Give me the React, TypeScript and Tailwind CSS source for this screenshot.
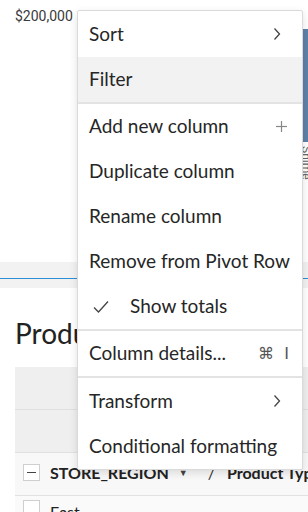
import React from "react";

const Chevron = () => (
  <svg width="8" height="14" viewBox="0 0 8 14" className="shrink-0">
    <polyline points="1.5,1.5 6.5,7 1.5,12.5" fill="none" stroke="#444" strokeWidth="1.3" />
  </svg>
);

const Plus = () => (
  <svg width="13" height="13" viewBox="0 0 13 13" className="shrink-0">
    <line x1="6.5" y1="1" x2="6.5" y2="12" stroke="#888" strokeWidth="1.2" />
    <line x1="1" y1="6.5" x2="12" y2="6.5" stroke="#888" strokeWidth="1.2" />
  </svg>
);

const Check = () => (
  <svg width="16" height="14" viewBox="0 0 16 14" className="shrink-0">
    <polyline points="1,7.5 5.5,12 15,1.5" fill="none" stroke="#444" strokeWidth="1.3" />
  </svg>
);

const Sep = () => <div className="h-[2px] bg-[#e3e3e3]" />;

export default function App() {
  return (
    <div className="relative w-[308px] h-[512px] overflow-hidden bg-white font-['Lato',sans-serif] text-[#262626]">
      {/* chart area */}
      <div className="relative h-[262px]">
        <div className="pl-[15px] pt-[8px] text-[14px] leading-[16px] text-[#3a3a3a] font-['Roboto',sans-serif]">
          $200,000
        </div>
        <div className="absolute left-[303px] top-[29px] w-[5px] h-[113px] bg-[#5f80a8]" />
        <div className="absolute left-[300px] top-[146px] origin-top-left rotate-90 translate-x-[12px] text-[12px] leading-[12px] whitespace-nowrap text-[#666] font-['Roboto',sans-serif]">
          Shime
        </div>
      </div>
      {/* band */}
      <div className="bg-[#f2f2f2]">
        <div className="h-[16px]" />
        <div className="h-px bg-[#2d8fd5]" />
        <div className="h-[9px]" />
      </div>
      {/* lower card */}
      <div className="bg-white">
        <div className="pl-[15px] pt-[29px] text-[28px] leading-[32px] text-[#222]">Product Types</div>
        <div className="ml-[15px] mt-[18px]">
          <div className="h-[43px] bg-[#efefef] border-b border-[#e0e0e0]" />
          <div className="h-[43px] bg-[#efefef] border-b border-[#e0e0e0]" />
          <div className="h-[43px] bg-[#f8f8f8] border-b border-[#e2e2e2] flex items-center pl-[8px] pb-[3px] whitespace-nowrap">
            <div className="w-[17px] h-[17px] bg-white border border-[#cfcfcf] flex items-center justify-center shrink-0">
              <div className="w-[9px] h-[1.5px] bg-[#444]" />
            </div>
            <span className="ml-[10px] text-[16px] font-bold text-[#222]">STORE_REGION</span>
            <span className="ml-[10px] text-[9px] text-[#444]">▼</span>
            <span className="ml-[20px] text-[16px] text-[#333]">/</span>
            <span className="ml-[12px] text-[16px] font-bold text-[#222]">Product Type</span>
          </div>
          <div className="h-[43px] bg-[#fafafa] flex items-start pl-[8px] pt-[4px] whitespace-nowrap">
            <div className="w-[17px] h-[17px] bg-white border border-[#cfcfcf] shrink-0" />
            <span className="ml-[10px] text-[16px] text-[#222] leading-[20px] mt-[2px]">East</span>
          </div>
        </div>
      </div>

      {/* menu */}
      <div className="absolute left-[77px] top-[10px] w-[226px] bg-white border border-[#dadada] rounded-[2px] shadow-[0_3px_8px_rgba(0,0,0,0.12)] text-[19px]">
        <div className="h-[46px] flex items-center justify-between pl-[11px] pr-[21px]">
          <span>Sort</span>
          <Chevron />
        </div>
        <div className="h-[45px] flex items-center pl-[11px] bg-[#f2f2f2]">
          <span>Filter</span>
        </div>
        <Sep />
        <div className="h-[45px] flex items-center justify-between pl-[11px] pr-[14px]">
          <span>Add new column</span>
          <Plus />
        </div>
        <div className="h-[45px] flex items-center pl-[11px]">
          <span>Duplicate column</span>
        </div>
        <div className="h-[45px] flex items-center pl-[11px]">
          <span>Rename column</span>
        </div>
        <div className="h-[45px] flex items-center pl-[11px] whitespace-nowrap">
          <span>Remove from Pivot Row</span>
        </div>
        <div className="h-[45px] flex items-center pl-[15px]">
          <Check />
          <span className="ml-[21px]">Show totals</span>
        </div>
        <Sep />
        <div className="h-[45px] flex items-center justify-between pl-[11px] pr-[13px]">
          <span>Column details...</span>
          <span className="text-[16px] text-[#555] font-['DejaVu_Sans',sans-serif] whitespace-nowrap">⌘&nbsp;&nbsp;I</span>
        </div>
        <Sep />
        <div className="h-[46px] flex items-center justify-between pl-[11px] pr-[21px]">
          <span>Transform</span>
          <Chevron />
        </div>
        <div className="h-[45px] flex items-center pl-[11px] whitespace-nowrap">
          <span>Conditional formatting</span>
        </div>
      </div>
    </div>
  );
}
